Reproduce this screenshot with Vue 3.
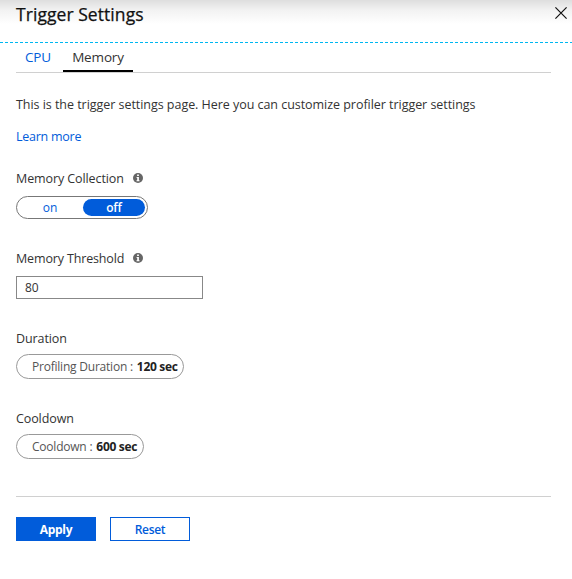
<script setup>
import { ref } from 'vue'

const collection = ref('off')
const threshold = ref('80')
const tab = ref('Memory')
</script>

<template>
  <main class="panel">
    <header class="header">
      <h1>Trigger Settings</h1>
      <button class="close" aria-label="Close">
        <svg width="12" height="12" viewBox="0 0 12 12"><path d="M.4.4 11.6 11.6M11.6.4.4 11.6" /></svg>
      </button>
    </header>
    <div class="content">
      <nav class="tabs">
        <button class="cpu" :class="{ active: tab === 'CPU' }" @click="tab = 'CPU'">CPU</button>
        <button class="memory" :class="{ active: tab === 'Memory' }" @click="tab = 'Memory'">Memory</button>
      </nav>
      <p class="intro">This is the trigger settings page. Here you can customize profiler trigger settings</p>
      <a class="learn">Learn more</a>

      <section class="field">
        <div class="label">
          <span class="name">Memory Collection</span>
          <svg class="info" width="10" height="10" viewBox="0 0 10 10"><circle cx="5" cy="5" r="5" /><path d="M4.1 1.5h1.8v1.5H4.1zM3.6 4h2.3v3.2h.6v1H3.5v-1h.7V5h-.6z" /></svg>
        </div>
        <div class="toggle">
          <button :class="{ selected: collection === 'on' }" @click="collection = 'on'">on</button>
          <button :class="{ selected: collection === 'off' }" @click="collection = 'off'">off</button>
        </div>
      </section>

      <section class="field">
        <div class="label">
          <span class="name threshold">Memory Threshold</span>
          <svg class="info" width="10" height="10" viewBox="0 0 10 10"><circle cx="5" cy="5" r="5" /><path d="M4.1 1.5h1.8v1.5H4.1zM3.6 4h2.3v3.2h.6v1H3.5v-1h.7V5h-.6z" /></svg>
        </div>
        <input v-model="threshold" class="input" />
      </section>

      <section class="field">
        <div class="label short"><span>Duration</span></div>
        <button class="pill duration"><span class="key">Profiling Duration :</span><b>120 sec</b></button>
      </section>

      <section class="field last">
        <div class="label short"><span>Cooldown</span></div>
        <button class="pill cooldown"><span class="key">Cooldown :</span><b>600 sec</b></button>
      </section>

      <footer class="actions">
        <button class="apply">Apply</button>
        <button class="reset">Reset</button>
      </footer>
    </div>
  </main>
</template>

<style>
body { background: #fff; }
</style>

<style scoped>
* { box-sizing: border-box; }
.panel {
  width: 572px;
  height: 579px;
  color: #333;
  font: 12.5px/20px "Open Sans", "Noto Sans", sans-serif;
  letter-spacing: -0.1px;
  white-space: nowrap;
  overflow: hidden;
}
button, input { margin: 0; padding: 0; border: 0; background: none; font: inherit; letter-spacing: inherit; color: inherit; }
.header {
  height: 43px;
  padding: 2px 5px 0 16px;
  display: flex;
  justify-content: space-between;
  align-items: flex-start;
  background:
    repeating-linear-gradient(90deg, #00b7f0 0 3px, #fff 3px 5px) 0 100% / 100% 1px no-repeat,
    linear-gradient(#dedede, #f2f2f2 10px, #fff 24px);
}
h1 { margin: 0; font-size: 17.5px; line-height: 24px; font-weight: 500; letter-spacing: 0.06px; color: #111; -webkit-text-stroke: 0.25px #111; }
.close { height: 12px; margin-top: 5px; display: flex; }
.close path { stroke: #111; stroke-width: 1.2; fill: none; }
.content { padding: 0 21px 0 16px; }
.tabs { height: 30px; display: flex; border-bottom: 1px solid #d0d0d0; }
.tabs button { height: 29px; font-size: 13.5px; line-height: 28px; letter-spacing: -0.15px; color: #015cda; border-bottom: 2px solid transparent; }
.cpu { width: 47px; padding-right: 3px; }
.memory { width: 70px; }
.tabs .active { color: #333; border-bottom-color: #000; }
.intro { margin: 22px 0 12px; letter-spacing: -0.04px; }
.learn { display: block; margin-bottom: 22px; color: #015cda; letter-spacing: -0.25px; }
.field { height: 80px; }
.field.last { height: 87px; }
.label { height: 27px; display: flex; align-items: flex-start; }
.label.short { height: 25px; }
.name { width: 117px; }
.threshold { letter-spacing: -0.15px; }
.info { margin-top: 4px; fill: #666; }
.info path { fill: #fff; }
.toggle { width: 132px; height: 23px; padding: 2px; display: flex; border: 1px solid #777; border-radius: 12px; }
.toggle button { width: 64px; height: 17px; padding-right: 2px; border-radius: 9px; font-size: 12px; line-height: 18px; color: #015cda; }
.toggle .selected { width: 62px; padding: 0; background: #015cda; color: #fff; font-weight: 600; }
.input { display: block; width: 187px; height: 23px; padding: 0 8px; border: 1px solid #888; font-size: 12px; background: #fff; }
.pill { height: 25px; padding-left: 15px; display: flex; gap: 4px; border: 1px solid #999; border-radius: 13px; font-size: 12px; line-height: 24px; letter-spacing: -0.22px; color: #555; }
.pill b { color: #222; letter-spacing: -0.3px; }
.duration { width: 168px; }
.cooldown { width: 128px; }
.actions { height: 45px; padding-top: 20px; display: flex; gap: 14px; border-top: 1px solid #d0d0d0; }
.actions button { width: 80px; height: 24px; border: 1px solid #015cda; line-height: 24px; font-size: 12px; letter-spacing: -0.3px; color: #015cda; font-weight: 600; }
.actions .apply { background: #015cda; color: #fff; font-weight: 700; }
</style>
